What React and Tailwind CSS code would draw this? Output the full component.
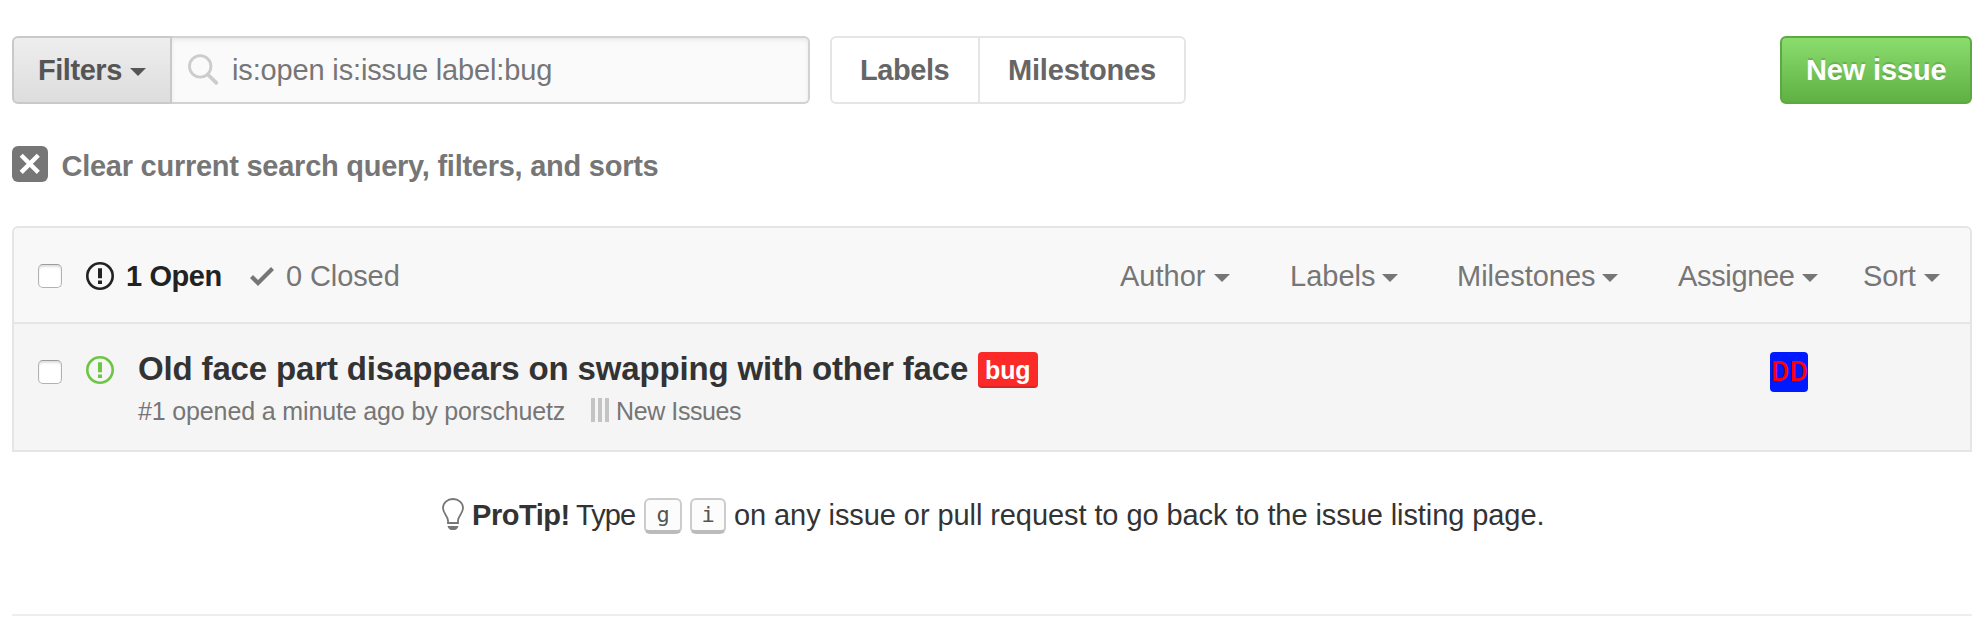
import React from "react";

function Caret({ className = "" }) {
  return (
    <svg className={"block h-2 w-4 shrink-0 " + className} viewBox="0 0 16 8" fill="currentColor">
      <path d="M0 0h16L8 8z" />
    </svg>
  );
}

function IssueIcon({ className = "" }) {
  return (
    <svg className={"block size-7 shrink-0 " + className} viewBox="0 0 28 28" fill="none">
      <circle cx="14" cy="14" r="12.7" stroke="currentColor" strokeWidth="2.6" />
      <path d="M12 6.2h4v10h-4zM12 18.4h4v3.6h-4z" fill="currentColor" />
    </svg>
  );
}

function Checkbox() {
  return (
    <span className="block size-6 shrink-0 rounded-[5px] border-[1.5px] border-[#b2b2b2] border-t-[#9c9c9c] bg-white shadow-[inset_0_2px_2px_rgba(0,0,0,0.12)]" />
  );
}

function Kbd({ className = "", children }) {
  return (
    <kbd
      className={
        "flex h-9 shrink-0 justify-center rounded-[6px] border-2 border-b-4 border-[#ccc] border-b-[#bbb] bg-[#fcfcfc] font-['DejaVu_Sans_Mono',monospace] text-[22px] leading-[29px] text-[#555] " +
        className
      }
    >
      {children}
    </kbd>
  );
}

export default function App() {
  return (
    <div className="h-[620px] w-[1986px] overflow-hidden bg-white px-3 pt-9 font-['Liberation_Sans',Arial,sans-serif] text-[29px] whitespace-nowrap text-[#333]">
      <div className="flex h-[68px]">
        <button className="flex w-[160px] items-center rounded-l-[6px] border-2 border-[#c9c9c9] bg-linear-to-b from-[#eee] to-[#ddd] pl-6 font-bold text-[#555]">
          <span className="w-[92px] pt-[2px] text-left tracking-[-0.45px]">Filters</span>
          <Caret className="mt-1" />
        </button>
        <div className="flex w-[638px] items-center rounded-r-[6px] border-2 border-l-0 border-[#d2d2d2] bg-[#fafafa] pl-4 shadow-[inset_0_2px_4px_rgba(0,0,0,0.075)]">
          <svg className="mr-[12px] block size-8 shrink-0" viewBox="0 0 32 32" fill="none" stroke="#ccc">
            <circle cx="12.2" cy="12.4" r="10.7" strokeWidth="2.8" />
            <path d="M20.300 21L28.300 28.800" strokeWidth="3.800" strokeLinecap="round" />
          </svg>
          <span className="pt-[2px] tracking-[-0.15px] text-[#767676]">is:open is:issue label:bug</span>
        </div>
        <div className="ml-5 flex rounded-[6px] border-2 border-[#e5e5e5] font-bold text-[#666]">
          <span className="flex w-[148px] items-center border-r-2 border-[#e5e5e5] pl-7 pt-[2px] tracking-[-0.44px]">Labels</span>
          <span className="flex w-[204px] items-center pl-7 pt-[2px] tracking-[-0.19px]">Milestones</span>
        </div>
        <button className="ml-auto mr-[2px] flex w-48 items-center rounded-[6px] border-2 border-[#5ca941] bg-linear-to-b from-[#8add6d] to-[#60b044] pl-6 pt-[2px] font-bold tracking-[-0.15px] text-white [text-shadow:0_-2px_0_rgba(0,0,0,0.15)]">
          New issue
        </button>
      </div>

      <div className="mt-[42px] flex h-9 font-bold text-[#767676]">
        <svg className="mr-[13.5px] block size-9 shrink-0" viewBox="0 0 36 36">
          <rect width="36" height="36" rx="6" fill="#767676" />
          <path d="M9.2 9.3L26.3 26.4M26.3 9.3L9.2 26.4" stroke="#fff" strokeWidth="4.4" />
        </svg>
        <span className="pt-[2px] leading-9 tracking-[-0.255px]">Clear current search query, filters, and sorts</span>
      </div>

      <div className="mr-[2px] mt-11 h-[226px] rounded-t-[6px] border-2 border-[#e5e5e5] bg-[#f5f5f5]">
        <div className="flex h-24 items-center rounded-t-[4px] border-b-2 border-[#e5e5e5] bg-[#f8f8f8] pl-6 pt-[2px] text-[#767676]">
          <Checkbox />
          <IssueIcon className="ml-6 text-[#222]" />
          <span className="ml-3 w-[124px] pt-[2px] font-bold tracking-[-0.4px] text-[#222]">1 Open</span>
          <svg className="block h-8 w-6 shrink-0" viewBox="0 0 12 16" fill="currentColor">
            <path d="M12 5L4 13L0 9l1.5-1.5L4 10l6.5-6.5z" />
          </svg>
          <span className="ml-3 w-[834px] pt-[2px] tracking-[-0.1px]">0 Closed</span>
          <span className="w-[94px] pt-[2px]">Author</span>
          <Caret className="mt-1" />
          <span className="ml-[60px] w-[92px] pt-[2px]">Labels</span>
          <Caret className="mt-1" />
          <span className="ml-[59px] w-[145px] pt-[2px]">Milestones</span>
          <Caret className="mt-1" />
          <span className="ml-[60px] w-[124px] pt-[2px] tracking-[-0.34px]">Assignee</span>
          <Caret className="mt-1" />
          <span className="ml-[45px] w-[61px] pt-[2px] tracking-[-0.1px]">Sort</span>
          <Caret className="mt-1" />
        </div>
        <div className="flex h-[126px] pl-6 pt-7">
          <div className="pt-2">
            <Checkbox />
          </div>
          <IssueIcon className="ml-6 mt-1 text-[#6cc644]" />
          <div className="ml-6 w-[1632px]">
            <div className="flex h-9">
              <span className="w-[840px] text-[33px] font-bold leading-[34px] tracking-[-0.15px]">
                Old face part disappears on swapping with other face
              </span>
              <span className="flex w-[60px] rounded-[4px] bg-[#fc2929] pl-[7px] text-[25px] font-bold leading-[36px] tracking-[-0.1px] text-white shadow-[inset_0_-2px_0_rgba(0,0,0,0.12)]">
                bug
              </span>
            </div>
            <div className="mt-[9px] flex text-[25px] leading-[29px] text-[#767676]">
              <span className="w-[453px] tracking-[-0.14px]">#1 opened a minute ago by porschuetz</span>
              <svg className="mt-[1px] block h-6 w-[18px] shrink-0" viewBox="0 0 18 24" fill="#c4c4c4">
                <path d="M0 0h4v24H0zM7 0h4v24H7zM14 0h4v24h-4z" />
              </svg>
              <span className="ml-[7px] tracking-[-0.4px]">New Issues</span>
            </div>
          </div>
          <span className="flex h-10 w-[38px] overflow-hidden rounded-[4px] bg-[#001aff] pl-[1px] font-[Roboto,sans-serif] text-[28px] leading-10 font-medium tracking-[0.3px] text-[#f00]">
            DD
          </span>
        </div>
      </div>

      <div className="mt-[46px] flex h-9 pl-[430px] leading-[34px]">
        <svg className="block h-8 w-[22px] shrink-0" viewBox="0 0 22 32" fill="none">
          <path
            d="M6 25V22.5C6 18 1 15.500 1 10C1 4.800 5.300 1 11 1S21 4.800 21 10C21 15.500 16 18 16 22.500V25z"
            stroke="#767676"
            strokeWidth="1.8"
          />
          <path d="M5.500 28h11c-.8 2.800-2.700 4.300-5.500 4.300S6.300 30.800 5.500 28z" fill="#767676" />
        </svg>
        <span className="ml-2 w-[104px] font-bold tracking-[-0.45px]">ProTip!</span>
        <span className="w-[68px] tracking-[-0.9px]">Type</span>
        <Kbd className="w-[38px]">g</Kbd>
        <Kbd className="ml-2 w-9">i</Kbd>
        <span className="ml-2 tracking-[-0.08px]">on any issue or pull request to go back to the issue listing page.</span>
      </div>

      <div className="mr-[2px] mt-20 h-[2px] bg-[#eee]" />
    </div>
  );
}
